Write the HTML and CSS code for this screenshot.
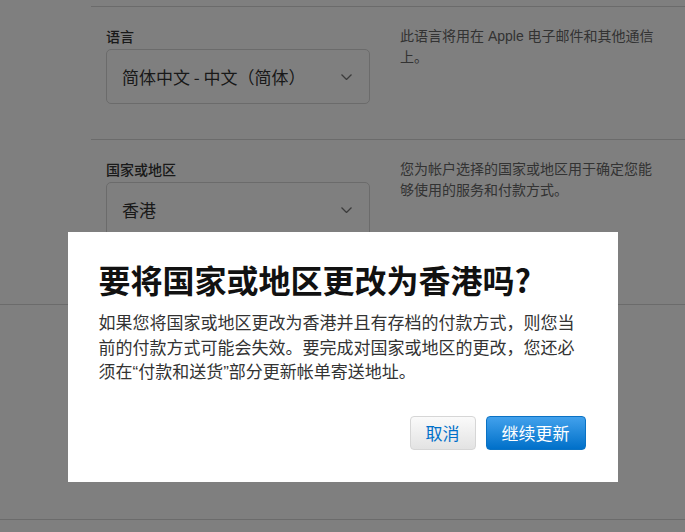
FILE: index.html
```html
<!DOCTYPE html>
<html lang="zh-CN">
<head>
<meta charset="utf-8">
<title>更改国家或地区</title>
<link rel="stylesheet" href="styles.css">
</head>
<body>
<div class="page">
  <div class="settings">
    <div class="row">
      <div class="field">
        <div class="label">语言</div>
        <div class="select">
          <span class="select-value">简体中文 - 中文（简体）</span>
          <svg class="chevron" width="11" height="6" viewBox="0 0 11 6"><path d="M0.5 0.5 L5.5 5.5 L10.5 0.5" fill="none" stroke="#777" stroke-width="1.3"/></svg>
        </div>
      </div>
      <p class="note">此语言将用在 Apple 电子邮件和其他通信上。</p>
    </div>
    <div class="row">
      <div class="field">
        <div class="label">国家或地区</div>
        <div class="select">
          <span class="select-value">香港</span>
          <svg class="chevron" width="11" height="6" viewBox="0 0 11 6"><path d="M0.5 0.5 L5.5 5.5 L10.5 0.5" fill="none" stroke="#777" stroke-width="1.3"/></svg>
        </div>
      </div>
      <p class="note">您为帐户选择的国家或地区用于确定您能够使用的服务和付款方式。</p>
    </div>
  </div>
  <div class="lower"></div>
</div>

<div class="overlay">
  <div class="dialog" role="dialog">
    <h1 class="dialog-title">要将国家或地区更改为香港吗?</h1>
    <p class="dialog-body">如果您将国家或地区更改为香港并且有存档的付款方式，则您当前的付款方式可能会失效。要完成对国家或地区的更改，您还必须在“付款和送货”部分更新帐单寄送地址。</p>
    <div class="actions">
      <button class="btn btn-secondary">取消</button>
      <button class="btn btn-primary">继续更新</button>
    </div>
  </div>
</div>
</body>
</html>
```

FILE: styles.css
```css
html, body {
  margin: 0;
  padding: 0;
  background: #fff;
}

body {
  font-family: "Noto Sans CJK SC", "Noto Sans", sans-serif;
  color: #333;
  overflow: hidden;
  height: 532px;
}

.page {
  padding-top: 6px;
}

.settings {
  margin-left: 91px;
}

.row {
  border-top: 1px solid #d6d6d6;
  padding: 19px 0 35px 15px;
  display: flex;
  gap: 30px;
}

.field {
  width: 264px;
  flex: none;
}

.label {
  font-size: 14px;
  line-height: 20px;
  font-weight: 500;
  color: #333;
  margin-bottom: 3px;
}

.select {
  box-sizing: border-box;
  height: 55px;
  border: 1px solid #d6d6d6;
  border-radius: 5px;
  display: flex;
  align-items: center;
  justify-content: space-between;
  padding: 0 17px 0 15px;
}

.select-value {
  font-size: 17px;
  line-height: 24px;
  color: #333;
}

.chevron {
  display: block;
}

.note {
  margin: 0;
  width: 262px;
  flex: none;
  font-family: "Liberation Sans", "Noto Sans CJK SC", sans-serif;
  font-size: 14px;
  line-height: 20.5px;
  color: #666;
  word-break: break-all;
}

.lower {
  margin-top: 32px;
  height: 214px;
  border-top: 1px solid #d6d6d6;
  border-bottom: 1px solid #d6d6d6;
}

.overlay {
  position: fixed;
  inset: 0;
  background: rgba(0, 0, 0, 0.5);
  display: flex;
  justify-content: center;
  align-items: flex-start;
  padding-top: 232px;
}

.dialog {
  box-sizing: border-box;
  width: 550px;
  background: #fff;
  padding: 27px 32px 32px 31px;
}

.dialog-title {
  margin: 0;
  font-size: 32px;
  line-height: 40px;
  font-weight: 700;
  color: #111;
}

.dialog-body {
  margin: 13px 0 0;
  font-family: "Liberation Sans", "Noto Sans CJK SC", sans-serif;
  font-size: 17px;
  line-height: 24.5px;
  color: #333;
  word-break: break-all;
}

.actions {
  margin-top: 30px;
  display: flex;
  justify-content: flex-end;
  gap: 10px;
}

.btn {
  box-sizing: border-box;
  height: 34px;
  padding: 0 15px;
  border-radius: 4px;
  font-family: inherit;
  font-size: 17px;
  line-height: 24px;
  cursor: pointer;
}

.btn-secondary {
  border: 1px solid #d6d6d6;
  background: linear-gradient(#fafafa, #e3e3e3);
  color: #0070c9;
}

.btn-primary {
  border: 1px solid #0a72c4;
  background: linear-gradient(#42a1ec, #0070c9);
  color: #fff;
}
```
